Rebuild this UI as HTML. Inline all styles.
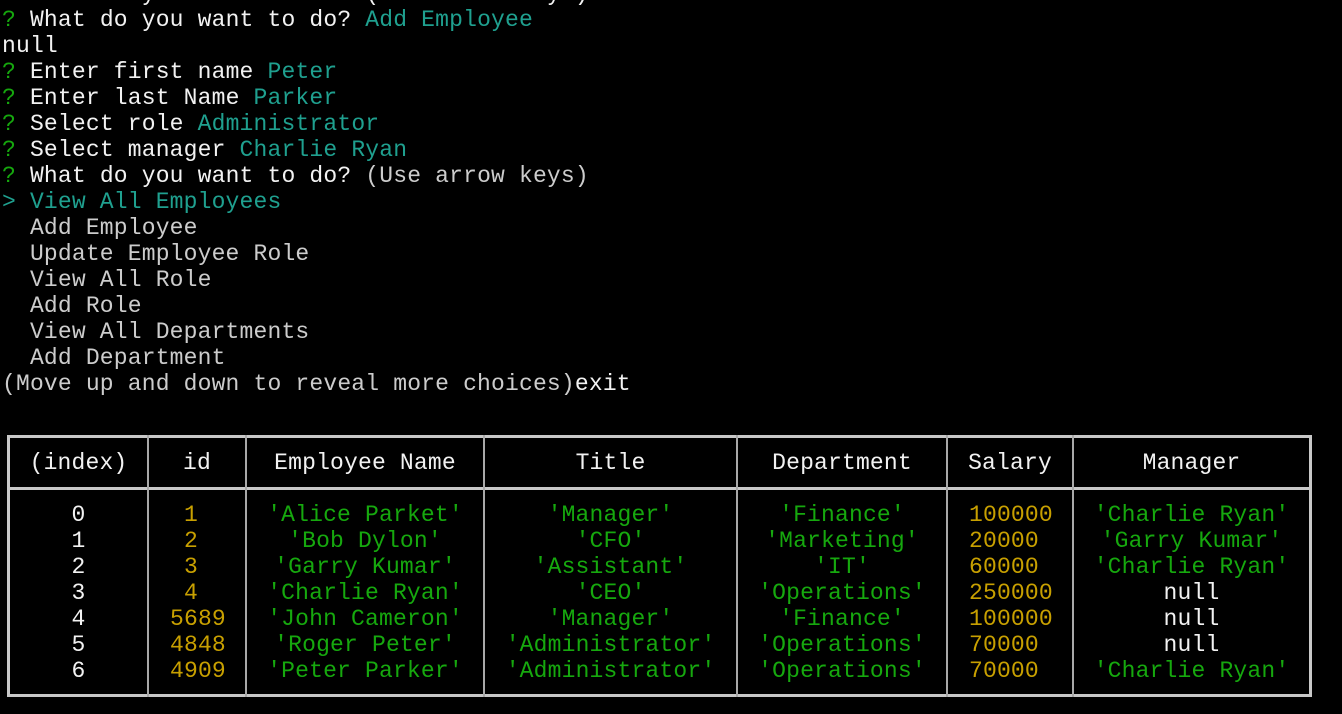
<!DOCTYPE html>
<html><head><meta charset="utf-8"><style>
html,body{margin:0;padding:0;background:#000;width:1342px;height:714px;overflow:hidden;position:relative}
body{font-family:"Liberation Mono",monospace;font-size:23px;color:#f2f2f2;letter-spacing:0.17px}
pre{position:absolute;left:2px;top:-19px;margin:0;font:inherit;line-height:26px;white-space:pre}
.g{color:#16a80e}.c{color:#1fa08f}.w{color:#f2f2f2}.m{color:#cccccc}.y{color:#c8a000}
.b{position:absolute;background:#c8c8c8}
.s{position:absolute;background:#a8a8a8}
.col{position:absolute;line-height:26px;white-space:pre}
.ctr{text-align:center}
</style></head><body>
<pre><span class="g">?</span> What do you want to do? (Use arrow keys)
<span class="g">?</span> What do you want to do? <span class="c">Add Employee</span>
null
<span class="g">?</span> Enter first name <span class="c">Peter</span>
<span class="g">?</span> Enter last Name <span class="c">Parker</span>
<span class="g">?</span> Select role <span class="c">Administrator</span>
<span class="g">?</span> Select manager <span class="c">Charlie Ryan</span>
<span class="g">?</span> What do you want to do? <span class="m">(Use arrow keys)</span>
<span class="c">&gt; View All Employees</span>
<span class="m">  Add Employee
  Update Employee Role
  View All Role
  Add Role
  View All Departments
  Add Department
(Move up and down to reveal more choices)</span>exit</pre>

<div class="b" style="left:7px;top:435px;width:1305px;height:3px"></div>
<div class="b" style="left:7px;top:694px;width:1305px;height:3px"></div>
<div class="b" style="left:7px;top:435px;width:3px;height:262px"></div>
<div class="b" style="left:1309px;top:435px;width:3px;height:262px"></div>
<div class="b" style="left:7px;top:487px;width:1305px;height:3px"></div>
<div class="s" style="left:147px;top:435px;width:2px;height:262px"></div>
<div class="s" style="left:245px;top:435px;width:2px;height:262px"></div>
<div class="s" style="left:483px;top:435px;width:2px;height:262px"></div>
<div class="s" style="left:736px;top:435px;width:2px;height:262px"></div>
<div class="s" style="left:946px;top:435px;width:2px;height:262px"></div>
<div class="s" style="left:1072px;top:435px;width:2px;height:262px"></div>

<div class="col ctr" style="left:10px;width:137px;top:450px">(index)</div>
<div class="col ctr" style="left:149px;width:96px;top:450px">id</div>
<div class="col ctr" style="left:247px;width:236px;top:450px">Employee Name</div>
<div class="col ctr" style="left:485px;width:251px;top:450px">Title</div>
<div class="col ctr" style="left:738px;width:208px;top:450px">Department</div>
<div class="col ctr" style="left:948px;width:124px;top:450px">Salary</div>
<div class="col ctr" style="left:1074px;width:235px;top:450px">Manager</div>

<div class="col ctr" style="left:10px;width:137px;top:502px">0
1
2
3
4
5
6</div>
<div class="col y" style="left:170px;top:502px"> 1
 2
 3
 4
5689
4848
4909</div>
<div class="col ctr g" style="left:247px;width:236px;top:502px">'Alice Parket'
'Bob Dylon'
'Garry Kumar'
'Charlie Ryan'
'John Cameron'
'Roger Peter'
'Peter Parker'</div>
<div class="col ctr g" style="left:485px;width:251px;top:502px">'Manager'
'CFO'
'Assistant'
'CEO'
'Manager'
'Administrator'
'Administrator'</div>
<div class="col ctr g" style="left:738px;width:208px;top:502px">'Finance'
'Marketing'
'IT'
'Operations'
'Finance'
'Operations'
'Operations'</div>
<div class="col y" style="left:969px;top:502px">100000
20000
60000
250000
100000
70000
70000</div>
<div class="col ctr g" style="left:1074px;width:235px;top:502px">'Charlie Ryan'
'Garry Kumar'
'Charlie Ryan'
<span class="w">null</span>
<span class="w">null</span>
<span class="w">null</span>
'Charlie Ryan'</div>
</body></html>
